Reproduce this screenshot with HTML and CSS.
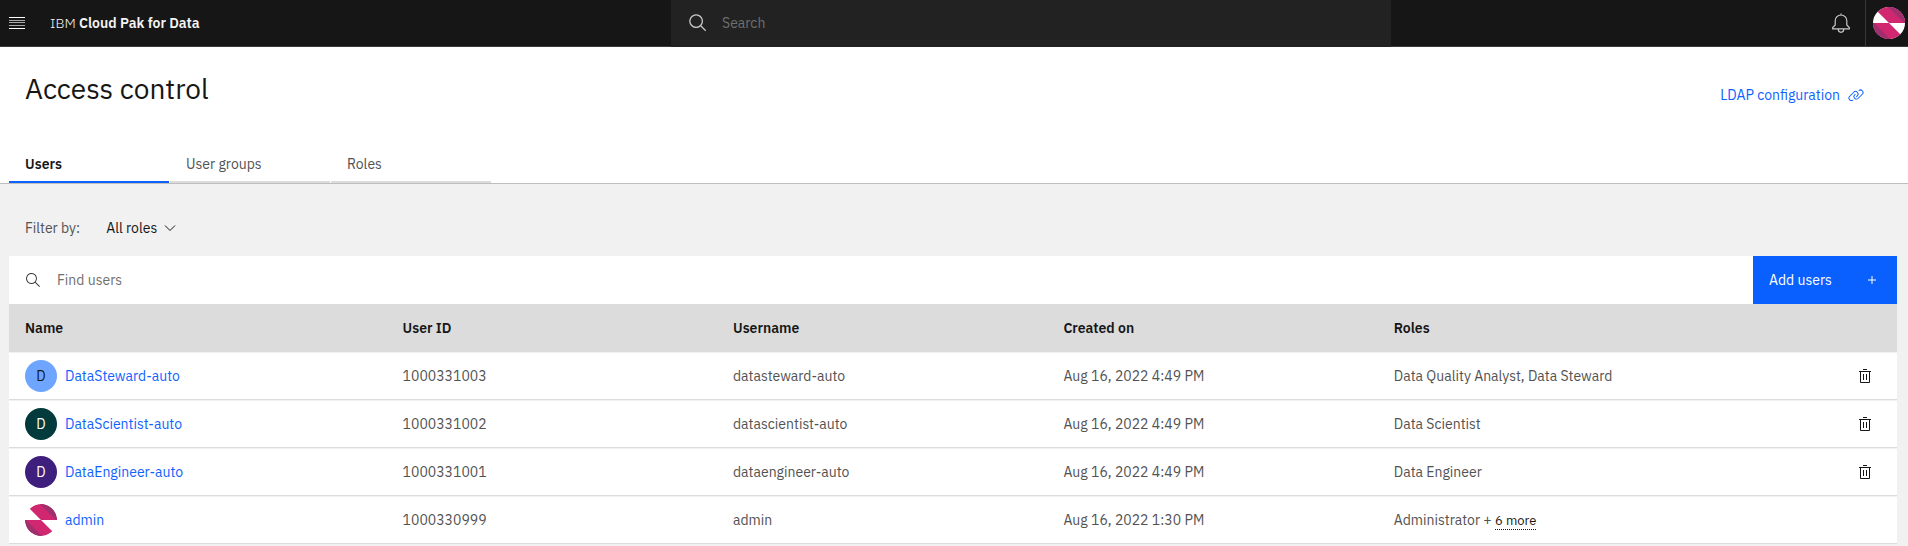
FILE: index.html
```html
<!DOCTYPE html>
<html lang="en">
<head>
<meta charset="utf-8">
<title>Access control - IBM Cloud Pak for Data</title>
<link rel="stylesheet" href="styles.css">
</head>
<body>
<svg class="defs" aria-hidden="true">
  <symbol id="trash" viewBox="0 0 16 16">
    <path d="M6 1.5h4M2 3.5h12M3.500 3.500v11h9v-11M6.500 6v6M9.500 6v6" fill="none" stroke="currentColor"/>
  </symbol>
  <symbol id="pinwheel" viewBox="0 0 32 32">
    <clipPath id="disc"><circle cx="16" cy="16" r="16"/></clipPath>
    <g clip-path="url(#disc)">
      <path fill="#fff" d="M0 0h32v32H0z"/>
      <path fill="#d12771" d="M16 16 0 0h32v16zM16 16H0v16h32z"/>
      <path fill="#9f2f6d" d="M15 0h17v16h-1zM0 16h1l16 16H0z"/>
    </g>
  </symbol>
</svg>

<header class="topbar">
  <div class="topbar-start">
    <button class="icon-button" aria-label="Menu">
      <svg width="16" height="12" viewBox="0 0 16 12"><path fill="#fff" d="M0 0h16v1H0zM0 11h16v1H0z"/><path fill="#a8a8a8" d="M0 3h16v1H0zM0 5h16v1H0zM0 8h16v1H0z"/></svg>
    </button>
    <a class="brand" href="#">IBM <strong>Cloud Pak for Data</strong></a>
  </div>
  <div class="global-search">
    <svg width="20" height="20" viewBox="0 0 32 32" fill="currentColor"><path d="M29 27.586l-7.552-7.552a11.018 11.018 0 1 0-1.414 1.414L27.586 29zM4 13a9 9 0 1 1 9 9 9.010 9.010 0 0 1-9-9z"/></svg>
    <input class="global-input" type="search" placeholder="Search" aria-label="Search">
  </div>
  <div class="topbar-end">
    <button class="icon-button" aria-label="Notifications">
      <svg width="20" height="20" viewBox="0 0 20 20" fill="none" stroke="#c6c6c6" stroke-width="1.200"><path d="M10 .5v1.500M10 2a5.800 5.800 0 0 0-5.800 5.800v4.200L1.700 14.500v1.300h16.600v-1.300L15.800 12V7.800A5.800 5.800 0 0 0 10 2zM7.300 16v.6a2.700 2.700 0 0 0 5.400 0V16"/></svg>
    </button>
    <button class="profile" aria-label="Profile">
      <svg width="32" height="32"><use href="#pinwheel"/></svg>
    </button>
  </div>
</header>

<div class="page-head">
  <div class="title-row">
    <h1>Access control</h1>
    <a class="ldap" href="#">LDAP configuration
      <svg width="16" height="16" viewBox="0 0 32 32" fill="currentColor"><path d="M29.250 6.760a6 6 0 0 0-8.500 0l1.420 1.420a4 4 0 1 1 5.670 5.670l-8 8a4 4 0 1 1-5.670-5.660l1.410-1.420-1.410-1.420-1.420 1.420a6 6 0 0 0 0 8.500A6 6 0 0 0 17 25a6 6 0 0 0 4.270-1.760l8-8a6 6 0 0 0-.020-8.480z"/><path d="M4.190 24.820a4 4 0 0 1 0-5.670l8-8a4 4 0 0 1 5.670 0A3.940 3.940 0 0 1 19 14a4 4 0 0 1-1.170 2.850L15.710 19l1.420 1.420 2.120-2.120a6 6 0 0 0-8.510-8.510l-8 8a6 6 0 0 0 0 8.510A6 6 0 0 0 7 28a6.070 6.070 0 0 0 4.280-1.760l-1.420-1.420a4 4 0 0 1-5.670 0z"/></svg>
    </a>
  </div>
  <nav class="tabs" role="tablist">
    <button class="tab selected" role="tab" aria-selected="true">Users</button>
    <button class="tab" role="tab" aria-selected="false">User groups</button>
    <button class="tab" role="tab" aria-selected="false">Roles</button>
  </nav>
</div>

<main>
  <div class="filter">
    <label for="role">Filter by:</label>
    <span class="select-wrap">
      <select id="role"><option>All roles</option></select>
      <svg width="12" height="8" viewBox="0 0 12 8" fill="none" stroke="currentColor"><path d="m1 1.500 5 5 5-5"/></svg>
    </span>
  </div>

  <div class="toolbar">
    <svg width="16" height="16" viewBox="0 0 16 16" fill="currentColor"><path d="M15 14.300L10.700 10c1.900-2.300 1.600-5.800-.7-7.700S4.200.7 2.300 3 .7 8.800 3 10.700c2 1.700 5 1.700 7 0l4.300 4.300.7-.7zM2 6.500C2 4 4 2 6.500 2S11 4 11 6.500 9 11 6.500 11 2 9 2 6.500z"/></svg>
    <input class="find" type="search" placeholder="Find users" aria-label="Find users">
    <button class="add">Add users
      <svg width="8" height="8" viewBox="0 0 8 8" stroke="currentColor"><path d="M4 0v8M0 4h8"/></svg>
    </button>
  </div>

  <table>
    <colgroup><col class="col-name"><col class="col"><col class="col"><col class="col"><col class="col-roles"><col class="col-action"></colgroup>
    <thead>
      <tr><th>Name</th><th>User ID</th><th>Username</th><th>Created on</th><th>Roles</th><td></td></tr>
    </thead>
    <tbody>
      <tr>
        <td><div class="user"><span class="avatar blue">D</span><a href="#">DataSteward-auto</a></div></td>
        <td>1000331003</td><td>datasteward-auto</td><td>Aug 16, 2022 4:49 PM</td><td>Data Quality Analyst, Data Steward</td>
        <td><button class="delete" aria-label="Delete DataSteward-auto"><svg width="16" height="16"><use href="#trash"/></svg></button></td>
      </tr>
      <tr>
        <td><div class="user"><span class="avatar teal">D</span><a href="#">DataScientist-auto</a></div></td>
        <td>1000331002</td><td>datascientist-auto</td><td>Aug 16, 2022 4:49 PM</td><td>Data Scientist</td>
        <td><button class="delete" aria-label="Delete DataScientist-auto"><svg width="16" height="16"><use href="#trash"/></svg></button></td>
      </tr>
      <tr>
        <td><div class="user"><span class="avatar purple">D</span><a href="#">DataEngineer-auto</a></div></td>
        <td>1000331001</td><td>dataengineer-auto</td><td>Aug 16, 2022 4:49 PM</td><td>Data Engineer</td>
        <td><button class="delete" aria-label="Delete DataEngineer-auto"><svg width="16" height="16"><use href="#trash"/></svg></button></td>
      </tr>
      <tr>
        <td><div class="user"><svg class="avatar" width="32" height="32"><use href="#pinwheel"/></svg><a href="#">admin</a></div></td>
        <td>1000330999</td><td>admin</td><td>Aug 16, 2022 1:30 PM</td><td>Administrator + <button class="more">6 more</button></td>
        <td></td>
      </tr>
    </tbody>
  </table>
</main>
</body>
</html>
```
FILE: styles.css
```css
* { box-sizing: border-box; }

body {
  margin: 0;
  background: #f1f1f1;
  color: #161616;
  font: 14px/18px "IBM Plex Sans", Inter, "Noto Sans", sans-serif;
}

button, input, select {
  margin: 0;
  padding: 0;
  border: 0;
  border-radius: 0;
  background: none;
  color: inherit;
  font: inherit;
  appearance: none;
}

a { color: #0f62fe; text-decoration: none; }
svg { display: block; flex: none; }
.defs { position: absolute; width: 0; height: 0; }

.topbar {
  display: grid;
  grid-template-columns: 671fr 720fr 517fr;
  height: 47px;
  background: #161616;
}
.topbar-start, .topbar-end {
  display: flex;
  align-items: center;
  border-bottom: 1px solid #393939;
}
.topbar-start { padding-left: 9px; gap: 25px; }
.topbar-end { justify-content: flex-end; }
.brand { color: #f4f4f4; font-weight: 300; }
.brand strong { font-weight: 600; }

.global-search {
  display: flex;
  align-items: center;
  gap: 14px;
  padding: 0 0 2px 17px;
  background: #222;
  color: #c6c6c6;
}
.global-input { flex: 1; align-self: stretch; }
.global-input::placeholder { color: #6f6f6f; }

.profile {
  display: flex;
  align-items: center;
  align-self: stretch;
  margin-left: 14px;
  padding: 0 3px 0 7px;
  border-left: 1px solid #393939;
}

.page-head { background: #fff; border-bottom: 1px solid #bebebe; }
.title-row {
  display: flex;
  justify-content: space-between;
  align-items: flex-start;
  padding: 24px 44px 0 25px;
}
h1 { margin: 0; font-size: 28px; line-height: 36px; font-weight: 400; }
.ldap { display: flex; align-items: center; gap: 8px; margin-top: 15px; }

.tabs { display: flex; gap: 1px; margin-top: 38px; padding-left: 9px; }
.tab {
  width: 160px;
  height: 38px;
  padding: 2px 16px 0;
  border-bottom: 2px solid #dcdcdc;
  color: #525252;
  text-align: left;
}
.selected { border-color: #0f62fe; color: #161616; font-weight: 600; }

main { padding: 24px 11px 24px 9px; }

.filter {
  display: flex;
  align-items: center;
  gap: 26px;
  height: 40px;
  margin-bottom: 8px;
  padding-left: 16px;
  color: #525252;
}
.select-wrap { display: grid; align-items: center; justify-items: end; color: #161616; }
.select-wrap > * { grid-area: 1 / 1; }
.select-wrap svg { pointer-events: none; }
select { padding-right: 18px; }

.toolbar {
  display: flex;
  align-items: center;
  height: 48px;
  padding-left: 16px;
  background: #fff;
  color: #393939;
}
.find { flex: 1; align-self: stretch; padding-left: 16px; }
.find::placeholder { color: #6f6f6f; }
.add {
  display: flex;
  align-items: center;
  justify-content: space-between;
  align-self: stretch;
  width: 144px;
  padding: 0 21px 0 16px;
  background: #0a5fff;
  color: #fff;
}

table {
  width: 100%;
  border-collapse: separate;
  border-spacing: 0;
  table-layout: fixed;
  text-align: left;
}
.col-name { width: 20%; }
.col { width: 17.5%; }
.col-action { width: 56px; }
tr { height: 48px; }
th, td { padding: 0 0 0 16px; }
th { font-weight: 600; }
thead { background: #dcdcdc; }
tbody td {
  border-top: 1px solid #f1f1f1;
  border-bottom: 1px solid #dcdcdc;
  background: #fff;
  color: #525252;
}

.user { display: flex; align-items: center; gap: 8px; }
.avatar {
  display: grid;
  place-items: center;
  width: 32px;
  height: 32px;
  border-radius: 50%;
  color: #fff;
}
.blue { background: #6ea6ff; color: #161616; }
.teal { background: #033a3b; }
.purple { background: #3f1f7d; }

.delete { display: block; color: #161616; }
.more {
  border-bottom: 1px dotted #161616;
  color: #161616;
  font-size: 13px;
  line-height: 16px;
}
```
